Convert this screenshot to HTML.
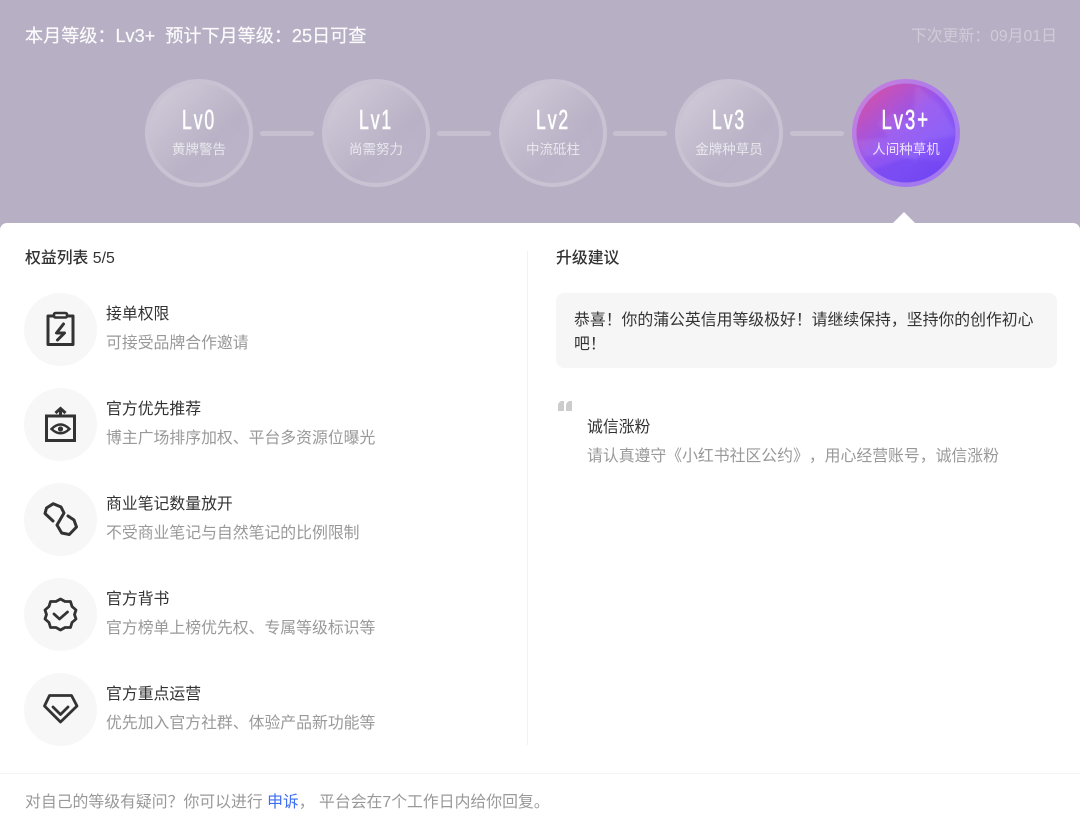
<!DOCTYPE html>
<html><head><meta charset="utf-8">
<style>
*{margin:0;padding:0;box-sizing:border-box;text-spacing-trim:space-all}
html,body{width:1080px;height:823px;overflow:hidden;background:#b7afc4;font-family:"Liberation Sans","Noto Sans CJK SC",sans-serif}
.a{position:absolute;white-space:nowrap}
.panel{position:absolute;left:0;top:223px;width:1080px;height:600px;background:#fff;border-radius:7px 7px 0 0}
.c{position:absolute;top:79px;width:108px;height:108px;border-radius:50%;border:4px solid rgba(255,255,255,.24);overflow:hidden;background:linear-gradient(135deg,rgba(255,255,255,.4),rgba(255,255,255,.04) 60%,rgba(255,255,255,.05));background-clip:padding-box;background-origin:border-box;background-repeat:no-repeat}
.c.on{border:none;background:linear-gradient(135deg,#cc80d8,#a67af0 55%,#a278f0)}
.c svg{position:absolute;left:0;top:0}
.lv{position:absolute;top:24px;height:34px;font-size:28px;line-height:34px;color:#fff;left:0;width:100%;text-align:center;-webkit-text-stroke:.6px #fff}
.lv span{display:inline-block;transform:scaleX(.63);transform-origin:center;letter-spacing:3px}
.n{position:absolute;top:62px;left:0;width:100%;text-align:center;font-size:13.5px;line-height:18px;color:rgba(255,255,255,.68)}
.g .lv{top:20px}.g .n{top:58px}
.bar{position:absolute;top:131px;width:54px;height:5px;border-radius:3px;background:rgba(255,255,255,.22)}
.ic{position:absolute;left:24px;width:73px;height:73px;border-radius:50%;background:#f7f7f7}
.ic svg{position:absolute;left:0;top:0}
.t{left:106px;font-size:15.85px;line-height:20px;color:#333}
.d{left:106px;font-size:15.85px;line-height:20px;color:#999}
.h{font-size:15.85px;line-height:20px;color:#333;font-weight:500}
</style></head><body>
<div class="a" style="left:25px;top:24px;font-size:18.1px;line-height:24px;color:#fff;opacity:.95;-webkit-text-stroke:.2px #fff">本月等级：Lv3+&nbsp; 预计下月等级：25日可查</div>
<div class="a" style="right:23px;top:26px;font-size:15.85px;line-height:22px;color:rgba(255,255,255,.35)">下次更新：09月01日</div>

<div class="bar" style="left:260px"></div><div class="bar" style="left:437px"></div><div class="bar" style="left:613px"></div><div class="bar" style="left:790px"></div>

<div class="c g" style="left:145px"><svg width="100" height="100"><path d="M26 100L40 60 58 72 80 40 100 58V100Z" fill="#fff" opacity=".025"/></svg><div class="lv"><span>Lv0</span></div><div class="n">黄牌警告</div></div>
<div class="c g" style="left:322px"><svg width="100" height="100"><path d="M14 52L36 26 60 58 78 44 98 70 70 100H40Z" fill="#fff" opacity=".025"/></svg><div class="lv"><span>Lv1</span></div><div class="n">尚需努力</div></div>
<div class="c g" style="left:499px"><svg width="100" height="100"><path d="M16 50L40 24 60 50 80 36 92 72 60 100H30Z" fill="#fff" opacity=".025"/></svg><div class="lv"><span>Lv2</span></div><div class="n">中流砥柱</div></div>
<div class="c g" style="left:675px"><svg width="100" height="100"><path d="M30 56L50 46 62 34 94 52 84 78 60 74 36 92Z" fill="#fff" opacity=".025"/></svg><div class="lv"><span>Lv3</span></div><div class="n">金牌种草员</div></div>
<div class="c on" style="left:852px"><svg width="108" height="108">
<defs><linearGradient id="g" x1="0.1" y1="0.05" x2="0.85" y2="0.95"><stop offset="0" stop-color="#d650a6"/><stop offset=".45" stop-color="#9655ee"/><stop offset=".75" stop-color="#8455f7"/><stop offset="1" stop-color="#7548f4"/></linearGradient>
<clipPath id="cp"><circle cx="54" cy="54" r="49.500"/></clipPath><filter id="b"><feGaussianBlur stdDeviation="1.500"/></filter></defs>
<circle cx="54" cy="54" r="49.500" fill="url(#g)"/>
<g clip-path="url(#cp)" filter="url(#b)">
<path d="M4 62L36 58 26 44 40 34 60 44 64 6 88 26 106 56 72 62 64 84 44 74 12 78Z" fill="#fff" opacity=".07"/>
<path d="M20 90L56 78 100 84 80 106H34Z" fill="#6c3ff0" opacity=".45"/>
</g></svg><div class="lv"><span style="transform:scaleX(.66)">Lv3+</span></div><div class="n" style="color:rgba(255,255,255,.82)">人间种草机</div></div>

<svg class="a" style="left:892px;top:212px" width="24" height="12"><path d="M0 12L12 0 24 12Z" fill="#fff"/></svg>
<div class="panel"></div>

<div class="a h" style="left:25px;top:249px">权益列表 5/5</div>
<div class="a h" style="left:556px;top:249px">升级建议</div>
<div class="a" style="left:527px;top:251px;width:1px;height:494px;background:#f2f2f2"></div>

<div class="ic" style="top:293px"><svg width="73" height="73" fill="none" stroke="#333" stroke-width="3" stroke-linejoin="round" stroke-linecap="round"><path d="M29 23H24V51.500H49V23H44"/><rect x="30" y="20" width="13" height="4.500" rx="1.500" stroke-width="2.600"/><path d="M39.500 31L32.500 40H40.500L33.500 47" stroke-width="3"/></svg></div>
<div class="a t" style="top:305px">接单权限</div>
<div class="a d" style="top:334px">可接受品牌合作邀请</div>

<div class="ic" style="top:388px"><svg width="73" height="73" fill="none" stroke="#333" stroke-width="3" stroke-linejoin="miter" stroke-linecap="butt"><path d="M22.500 28H50.500V52.500H22.500Z"/><path d="M36.500 28V21M31.500 25L36.500 20.500 41.500 25"/><path d="M27.500 41Q36.500 32 45.500 41 36.500 49.500 27.500 41Z" stroke-width="2.400"/><circle cx="36.500" cy="41" r="2.600" fill="#333" stroke="none"/></svg></div>
<div class="a t" style="top:400px">官方优先推荐</div>
<div class="a d" style="top:429px">博主广场排序加权、平台多资源位曝光</div>

<div class="ic" style="top:483px"><svg width="73" height="73" fill="none" stroke="#333" stroke-width="3" stroke-linejoin="round" stroke-linecap="round"><path d="M29 38L21 30.500 22.500 25 29.300 20.700 37 24 40 30 33 42 37.700 50 45.300 51.500 52.500 44 50 37 44 33"/></svg></div>
<div class="a t" style="top:495px">商业笔记数量放开</div>
<div class="a d" style="top:524px">不受商业笔记与自然笔记的比例限制</div>

<div class="ic" style="top:578px"><svg width="73" height="73" fill="none" stroke="#333" stroke-width="2.800" stroke-linejoin="round" stroke-linecap="round"><path d="M36.500 21L41 23.500 46.500 23.500 48 28.500 52 32 50.500 36.500 52 41 48 44.500 46.500 49.500 41 49.500 36.500 52 32 49.500 26.500 49.500 25 44.500 21 41 22.500 36.500 21 32 25 28.500 26.500 23.500 32 23.500Z"/><path d="M30 36L35.500 41 43.500 34"/></svg></div>
<div class="a t" style="top:590px">官方背书</div>
<div class="a d" style="top:619px">官方榜单上榜优先权、专属等级标识等</div>

<div class="ic" style="top:673px"><svg width="73" height="73" fill="none" stroke="#333" stroke-width="2.800" stroke-linejoin="round" stroke-linecap="round"><path d="M25.500 22.500H47.500L53 33 36.500 49 20.500 33Z"/><path d="M29 34L36.500 41.500 44 34"/></svg></div>
<div class="a t" style="top:685px">官方重点运营</div>
<div class="a d" style="top:714px">优先加入官方社群、体验产品新功能等</div>

<div class="a" style="left:556px;top:293px;width:501px;height:75px;background:#f6f6f6;border-radius:8px"></div>
<div class="a" style="left:574px;top:309px;width:470px;font-size:15.85px;line-height:24px;color:#333;white-space:normal">恭喜！你的蒲公英信用等级极好！请继续保持，坚持你的创作初心吧！</div>
<svg class="a" style="left:558px;top:401px" width="15" height="10"><path d="M0 10V4Q0 2 3 0H6V10ZM8 10V4Q8 2 11 0H14V10Z" fill="#ccc"/></svg>
<div class="a t" style="left:587px;top:418px">诚信涨粉</div>
<div class="a d" style="left:587px;top:447px">请认真遵守《小红书社区公约》，用心经营账号，诚信涨粉</div>

<div class="a" style="left:0;top:773px;width:1080px;height:1px;background:#f4f4f4"></div>
<div class="a" style="left:25px;top:793px;font-size:15.85px;line-height:20px;color:#999">对自己的等级有疑问？你可以进行 <span style="color:#3d6df0">申诉</span>， 平台会在7个工作日内给你回复。</div>
</body></html>
